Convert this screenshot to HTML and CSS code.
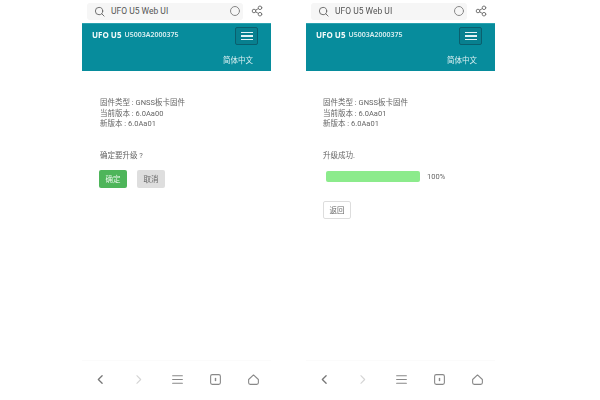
FILE: index.html
```html
<!DOCTYPE html>
<html lang="zh">
<head>
<meta charset="utf-8">
<title>UFO U5 Web UI</title>
<link rel="stylesheet" href="styles.css">
</head>
<body>
<div class="stage">
  <section class="phone">
    <div class="addr">
      <div class="addr-field">
        <svg class="ic-search" viewBox="0 0 12 12"><circle cx="5.5" cy="5.5" r="4"/><path d="M8.5 8.5 11 11"/></svg>
        <span class="addr-text">UFO U5 Web UI</span>
        <svg class="ic-reload" viewBox="0 0 12 12"><circle cx="6" cy="6" r="4.5"/></svg>
      </div>
      <svg class="ic-share" viewBox="0 0 12 12"><circle cx="3" cy="6" r="1.8"/><circle cx="9" cy="2.8" r="1.8"/><circle cx="9" cy="9.2" r="1.8"/><path d="M4.6 5.1 7.4 3.6M4.6 6.9 7.4 8.4"/></svg>
    </div>
    <header class="head">
      <div class="head-top">
        <span class="brand">UFO U5</span>
        <span class="serial">U5003A2000375</span>
        <span class="menu"><i></i><i></i><i></i></span>
      </div>
      <div class="lang">简体中文</div>
    </header>
    <main class="body">
      <p class="info">固件类型 : GNSS板卡固件<br>当前版本 : 6.0Aa00<br>新版本 : 6.0Aa01</p>
      <p class="msg">确定要升级 ?</p>
      <div class="actions">
        <span class="btn btn-ok">确定</span>
        <span class="btn btn-cancel">取消</span>
      </div>
    </main>
    <nav class="nav">
      <svg class="nv dark" viewBox="0 0 12 12"><path d="M7.5 2.5 4 6l3.5 3.5"/></svg>
      <svg class="nv light" viewBox="0 0 12 12"><path d="M4.5 2.5 8 6 4.5 9.5"/></svg>
      <svg class="nv" viewBox="0 0 12 12"><path d="M1.5 2.5h9M1.5 6h9M1.5 9.5h9"/></svg>
      <svg class="nv" viewBox="0 0 12 12"><rect x="1.5" y="1.5" width="9" height="9" rx="1.5"/><path class="num" d="M6 4.5v3"/></svg>
      <svg class="nv" viewBox="0 0 12 12"><path d="M1.5 6 6 1.8 10.5 6v3a1.5 1.5 0 0 1-1.5 1.5H3A1.5 1.5 0 0 1 1.5 9z"/></svg>
    </nav>
  </section>
  <section class="phone">
    <div class="addr">
      <div class="addr-field">
        <svg class="ic-search" viewBox="0 0 12 12"><circle cx="5.5" cy="5.5" r="4"/><path d="M8.5 8.5 11 11"/></svg>
        <span class="addr-text">UFO U5 Web UI</span>
        <svg class="ic-reload" viewBox="0 0 12 12"><circle cx="6" cy="6" r="4.5"/></svg>
      </div>
      <svg class="ic-share" viewBox="0 0 12 12"><circle cx="3" cy="6" r="1.8"/><circle cx="9" cy="2.8" r="1.8"/><circle cx="9" cy="9.2" r="1.8"/><path d="M4.6 5.1 7.4 3.6M4.6 6.9 7.4 8.4"/></svg>
    </div>
    <header class="head">
      <div class="head-top">
        <span class="brand">UFO U5</span>
        <span class="serial">U5003A2000375</span>
        <span class="menu"><i></i><i></i><i></i></span>
      </div>
      <div class="lang">简体中文</div>
    </header>
    <main class="body body-done">
      <p class="info">固件类型 : GNSS板卡固件<br>当前版本 : 6.0Aa01<br>新版本 : 6.0Aa01</p>
      <p class="msg">升级成功.</p>
      <div class="progress">
        <div class="track"></div>
        <span class="pct">100%</span>
      </div>
      <span class="btn btn-back">返回</span>
    </main>
    <nav class="nav">
      <svg class="nv dark" viewBox="0 0 12 12"><path d="M7.5 2.5 4 6l3.5 3.5"/></svg>
      <svg class="nv light" viewBox="0 0 12 12"><path d="M4.5 2.5 8 6 4.5 9.5"/></svg>
      <svg class="nv" viewBox="0 0 12 12"><path d="M1.5 2.5h9M1.5 6h9M1.5 9.5h9"/></svg>
      <svg class="nv" viewBox="0 0 12 12"><rect x="1.5" y="1.5" width="9" height="9" rx="1.5"/><path class="num" d="M6 4.5v3"/></svg>
      <svg class="nv" viewBox="0 0 12 12"><path d="M1.5 6 6 1.8 10.5 6v3a1.5 1.5 0 0 1-1.5 1.5H3A1.5 1.5 0 0 1 1.5 9z"/></svg>
    </nav>
  </section>
</div>
</body>
</html>
```
FILE: styles.css
```css
* { box-sizing: border-box; }
html, body { margin: 0; height: 100%; background: #fff; }
body { font-family: Roboto, "Noto Sans CJK SC", sans-serif; overflow: hidden; }
.stage { display: flex; gap: 35px; padding-left: 82px; height: 400px; filter: blur(.35px); }
.phone { width: 189px; height: 400px; display: flex; flex-direction: column; }

.addr { height: 23px; display: flex; align-items: center; padding: 0 0 1px 5px; gap: 8px; }
.addr-field { width: 156px; height: 17px; background: #f6f6f6; border-radius: 3px; display: flex; align-items: center; padding: 0 2px 0 7px; }
.addr-text { font-size: 8.5px; color: #555; margin-left: 6px; flex: 1; }
svg { fill: none; stroke-linecap: round; stroke-linejoin: round; }
.ic-search { width: 11px; height: 11px; stroke: #666; stroke-width: 1; }
.ic-reload { width: 12px; height: 12px; stroke: #888; stroke-width: 1; }
.ic-share { width: 12px; height: 12px; stroke: #777; stroke-width: 1; }

.head { height: 48px; background: #078c9c; color: #fff; padding: 3px 7px 0 10px; border-top: 1px solid #2ba3b0; }
.head-top { display: flex; align-items: flex-start; height: 20px; }
.brand { font-family: "Noto Sans", sans-serif; font-size: 8px; font-weight: 700; line-height: 18px; color: #f2fafa; margin-top: -1px; }
.serial { font-family: "Noto Sans", sans-serif; font-size: 7px; font-weight: 600; line-height: 18px; margin: -1px 0 0 3px; color: #d8eef0; }
.menu { margin-left: auto; margin-right: 6px; width: 23px; height: 18px; border: 1px solid #0a5f6e; border-radius: 2px; background: #08808f; display: flex; flex-direction: column; justify-content: center; align-items: center; gap: 2px; }
.menu i { display: block; width: 12px; height: 1.5px; background: #e4f4f5; }
.lang { font-size: 7.5px; color: #dcf0f2; text-align: right; margin: 8px 11px 0 0; line-height: 12px; }

.body { flex: 1; padding: 27px 0 0 18px; color: #666; font-size: 7.5px; }
.body-done { padding-left: 17px; }
.info { margin: 0; line-height: 10.5px; }
.msg { margin: 20px 0 0; line-height: 11px; }
.actions { display: flex; gap: 10px; margin: 9px 0 0 -1px; }
.btn { display: inline-flex; align-items: center; justify-content: center; border-radius: 2px; font-size: 7.5px; }
.btn-ok { width: 28px; height: 18px; background: #4eb55a; color: #e8f6ea; }
.btn-cancel { width: 28px; height: 18px; background: #dedede; color: #666; }
.progress { display: flex; align-items: center; margin: 10px 0 0 3px; gap: 7px; }
.track { width: 94px; height: 11px; background: #8ceb8c; border-radius: 2px; }
.pct { font-size: 7.5px; color: #666; }
.btn-back { width: 28px; height: 18px; margin-top: 19px; border: 1px solid #ddd; background: #fff; color: #666; }

.nav { height: 40px; display: flex; align-items: center; padding: 0 11px 2px 12px; justify-content: space-between; border-top: 1px solid #fbfbfb; }
.nv { width: 13px; height: 13px; stroke: #888; stroke-width: 1; }
.nv.dark { stroke: #777; stroke-width: 1.2; }
.nv.light { stroke: #d4d4d4; }
.num { stroke-width: 1.3; stroke-linecap: butt; }
```
